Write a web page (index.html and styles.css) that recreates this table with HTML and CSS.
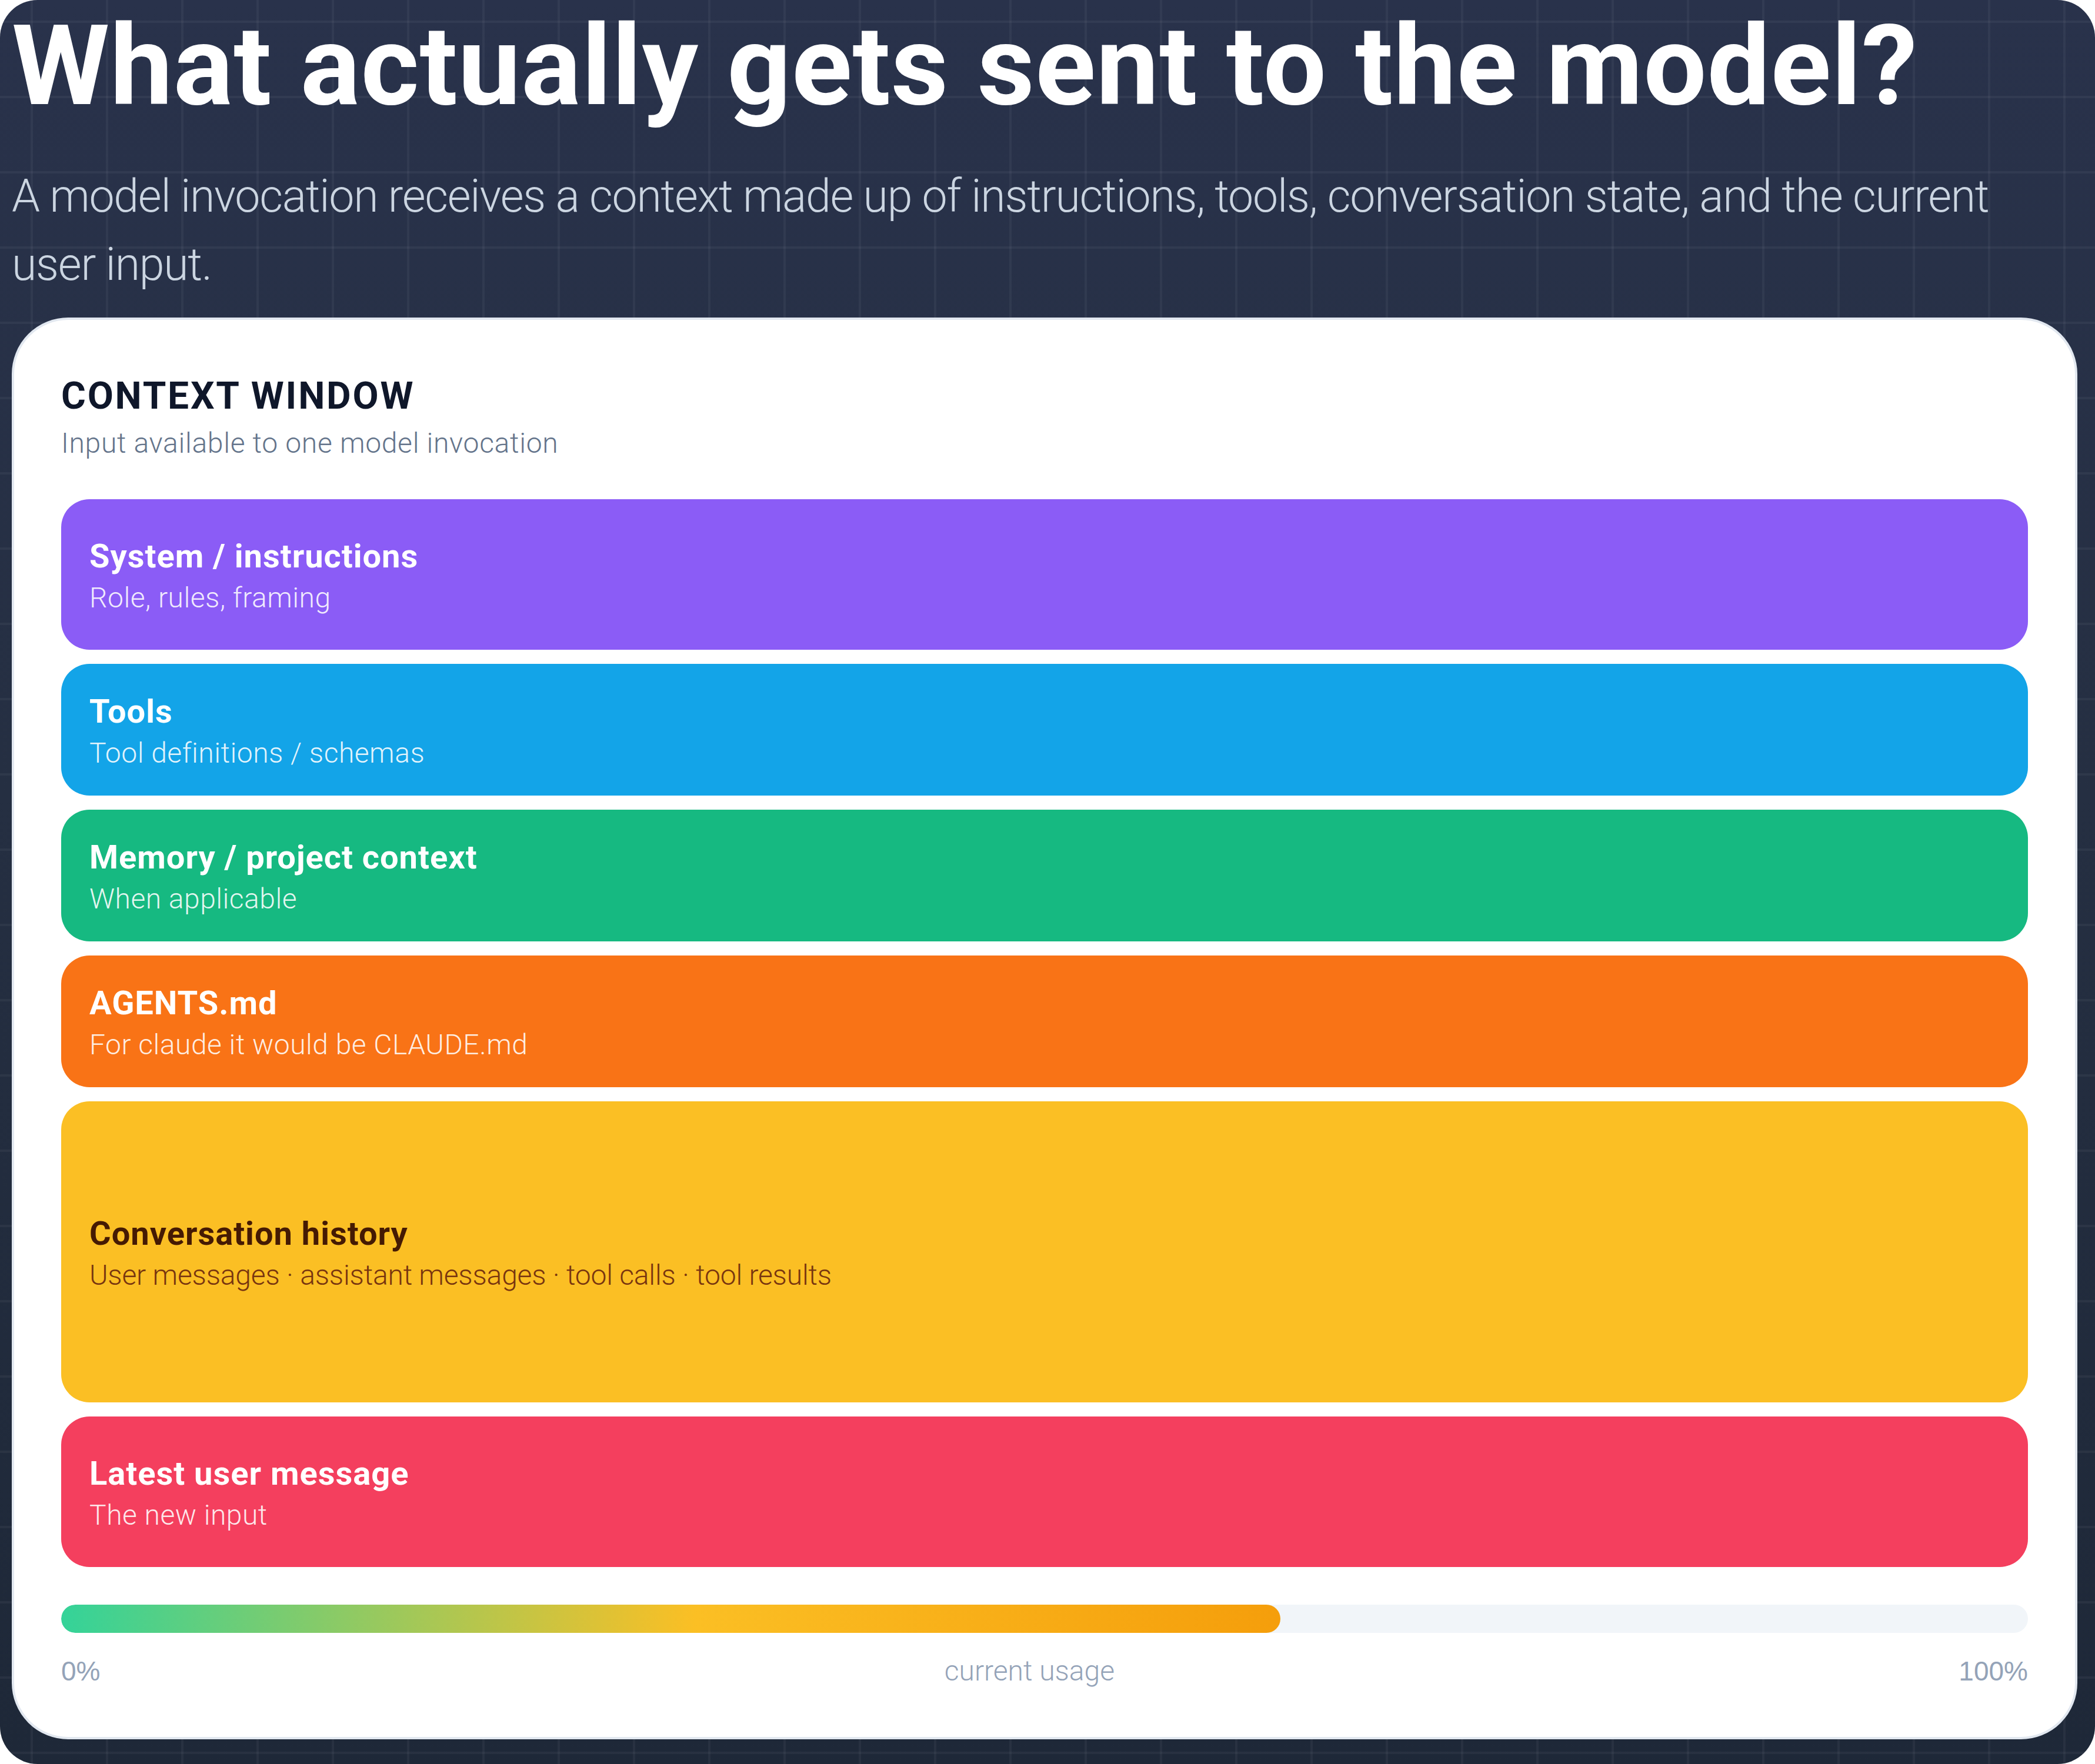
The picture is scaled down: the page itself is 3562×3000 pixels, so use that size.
FILE: index.html
```html
<!DOCTYPE html>
<html lang="en">
<head>
<meta charset="utf-8">
<title>What actually gets sent to the model?</title>
<link rel="stylesheet" href="styles.css">
</head>
<body>
<div class="page">
  <h1 class="title">What actually gets sent to the model?</h1>
  <p class="lede">A model invocation receives a context made up of instructions, tools, conversation state, and the current<br>user input.</p>
  <section class="card">
    <h2 class="card-title">CONTEXT WINDOW</h2>
    <p class="card-sub">Input available to one model invocation</p>
    <div class="stack">
      <div class="seg seg-md seg-system">
        <div class="seg-title">System / instructions</div>
        <div class="seg-desc">Role, rules, framing</div>
      </div>
      <div class="seg seg-sm seg-tools">
        <div class="seg-title">Tools</div>
        <div class="seg-desc">Tool definitions / schemas</div>
      </div>
      <div class="seg seg-sm seg-memory">
        <div class="seg-title">Memory / project context</div>
        <div class="seg-desc">When applicable</div>
      </div>
      <div class="seg seg-sm seg-agents">
        <div class="seg-title">AGENTS.md</div>
        <div class="seg-desc">For claude it would be CLAUDE.md</div>
      </div>
      <div class="seg seg-lg seg-history">
        <div class="seg-title">Conversation history</div>
        <div class="seg-desc seg-desc-list">User messages · assistant messages · tool calls · tool results</div>
      </div>
      <div class="seg seg-md seg-latest">
        <div class="seg-title">Latest user message</div>
        <div class="seg-desc">The new input</div>
      </div>
    </div>
    <div class="meter"><div class="meter-fill" style="width:62%"></div></div>
    <div class="meter-labels">
      <span class="pct">0%</span>
      <span class="meter-caption">current usage</span>
      <span class="pct">100%</span>
    </div>
  </section>
</div>
</body>
</html>
```
FILE: styles.css
```css
html, body {
  margin: 0;
  padding: 0;
  background: #ffffff;
}

body {
  font-family: Roboto, "Noto Sans", "Liberation Sans", sans-serif;
}

.page {
  box-sizing: border-box;
  width: 3562px;
  height: 3000px;
  padding: 8px 30px 0 20px;
  border-radius: 64px;
  overflow: hidden;
  background-color: #252f42;
  background-image:
    linear-gradient(rgba(255, 255, 255, 0.045) 4px, transparent 4px),
    linear-gradient(90deg, rgba(255, 255, 255, 0.045) 4px, transparent 4px),
    linear-gradient(180deg, #29324b 0%, #252f42 45%, #1e2838 100%);
  background-size: 128px 128px, 128px 128px, 100% 100%;
  background-position: 52px 35px, 52px 35px, 0 0;
}

.title {
  margin: 0;
  font-size: 190px;
  line-height: 209px;
  font-weight: 700;
  letter-spacing: 1px;
  color: #ffffff;
}

.lede {
  margin: 59px 0 0;
  font-size: 77px;
  line-height: 116px;
  font-weight: 300;
  letter-spacing: -1.25px;
  color: #cbd5e1;
}

.card {
  margin-top: 32px;
  background: #ffffff;
  border: 4px solid #e2e8f0;
  border-radius: 96px;
  padding: 90px 80px 76px;
}

.card-title {
  margin: 0;
  font-size: 64px;
  line-height: 80px;
  font-weight: 700;
  letter-spacing: 2.8px;
  color: #0f172a;
}

.card-sub {
  margin: 4px 0 0;
  font-size: 48px;
  line-height: 72px;
  font-weight: 300;
  letter-spacing: 0.7px;
  color: #64748b;
}

.stack {
  margin-top: 59px;
  display: flex;
  flex-direction: column;
  gap: 24px;
}

.seg {
  box-sizing: border-box;
  display: flex;
  flex-direction: column;
  justify-content: center;
  padding: 10px 48px 0;
  border-radius: 48px;
  color: #ffffff;
}

.seg-sm { min-height: 224px; }
.seg-md { min-height: 256px; }
.seg-lg { min-height: 512px; }

.seg-title {
  font-size: 56px;
  line-height: 70px;
  font-weight: 700;
  letter-spacing: 1px;
}

.seg-desc {
  font-size: 48px;
  line-height: 72px;
  font-weight: 300;
  letter-spacing: 0.5px;
  color: rgba(255, 255, 255, 0.88);
}

.seg-desc-list {
  letter-spacing: -0.2px;
}

.seg-system { background: #8b5cf6; }
.seg-tools { background: #13a4e8; }
.seg-memory { background: #16b981; }
.seg-agents { background: #f97316; }
.seg-history { background: #fbbf24; }
.seg-latest { background: #f43f5e; }

.seg-history .seg-title { color: #451a03; }
.seg-history .seg-desc { color: #78350f; }

.meter {
  margin-top: 64px;
  height: 48px;
  border-radius: 24px;
  background: #f1f5f9;
  overflow: hidden;
}

.meter-fill {
  height: 100%;
  border-radius: 24px;
  background: linear-gradient(90deg, #34d399 0%, #fbbf24 52%, #f59e0b 100%);
}

.meter-labels {
  margin-top: 29px;
  display: flex;
  justify-content: space-between;
  font-size: 48px;
  line-height: 72px;
  color: #94a3b8;
}

.pct {
  font-family: "Liberation Sans", Arial, sans-serif;
  font-size: 46px;
}

.meter-caption {
  font-weight: 300;
}
```
